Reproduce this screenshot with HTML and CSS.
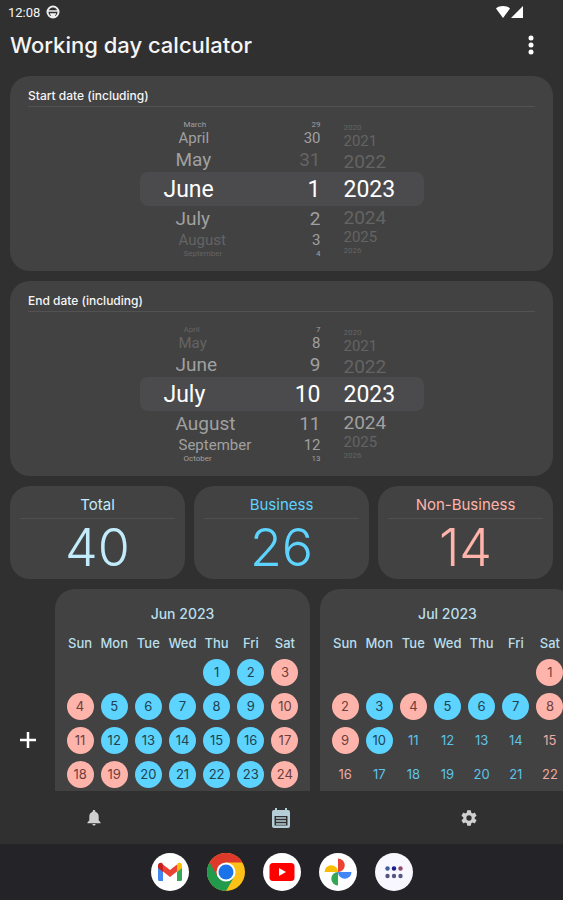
FILE: index.html
```html
<!DOCTYPE html>
<html lang="en">
<head>
  <meta charset="utf-8">
  <meta name="viewport" content="width=device-width, initial-scale=1">
  <title>Working day calculator</title>
  <link rel="stylesheet" href="styles.css">
</head>
<body>
  <div class="app">
    <div class="status-bar">
      <span class="clock">12:08</span>
      <svg class="status-icon" viewBox="0 0 14 14" width="14" height="14">
        <circle cx="7" cy="7" r="5.5" fill="none" stroke="#eee" stroke-width="2"/>
        <path d="M2 6h10M4 9h6" stroke="#eee" stroke-width="1.6"/>
        <path d="M5 9h4v3H5z" fill="#eee"/>
      </svg>
      <svg class="signal" viewBox="0 0 30 14" width="30" height="14">
        <path d="M1 3.5C4.500 .3 11.500 .3 15 3.500L8 13z" fill="#fff"/>
        <path d="M28 1v12H16z" fill="#fff"/>
      </svg>
    </div>

    <header class="header">
      <h1>Working day calculator</h1>
      <button class="icon-button" aria-label="More options">
        <svg viewBox="0 0 8 22" width="8" height="22" fill="#fff">
          <circle cx="4" cy="4" r="2.500"/><circle cx="4" cy="11" r="2.500"/><circle cx="4" cy="18" r="2.500"/>
        </svg>
      </button>
    </header>

    <main class="content">
      <section class="card date-card">
        <h2>Start date (including)</h2>
        <div class="picker">
          <ul class="wheel month">
            <li class="edge">March</li>
            <li class="far">April</li>
            <li class="near">May</li>
            <li class="selected">June</li>
            <li class="near">July</li>
            <li class="far dim">August</li>
            <li class="edge dim">September</li>
          </ul>
          <ul class="wheel day">
            <li class="edge">29</li>
            <li class="far">30</li>
            <li class="near dim">31</li>
            <li class="selected">1</li>
            <li class="near">2</li>
            <li class="far">3</li>
            <li class="edge">4</li>
          </ul>
          <ul class="wheel year">
            <li class="edge dim">2020</li>
            <li class="far dim">2021</li>
            <li class="near dim">2022</li>
            <li class="selected">2023</li>
            <li class="near dim">2024</li>
            <li class="far dim">2025</li>
            <li class="edge dim">2026</li>
          </ul>
        </div>
      </section>

      <section class="card date-card">
        <h2>End date (including)</h2>
        <div class="picker">
          <ul class="wheel month">
            <li class="edge dim">April</li>
            <li class="far dim">May</li>
            <li class="near">June</li>
            <li class="selected">July</li>
            <li class="near">August</li>
            <li class="far">September</li>
            <li class="edge">October</li>
          </ul>
          <ul class="wheel day">
            <li class="edge">7</li>
            <li class="far">8</li>
            <li class="near">9</li>
            <li class="selected">10</li>
            <li class="near">11</li>
            <li class="far">12</li>
            <li class="edge">13</li>
          </ul>
          <ul class="wheel year">
            <li class="edge dim">2020</li>
            <li class="far dim">2021</li>
            <li class="near dim">2022</li>
            <li class="selected">2023</li>
            <li class="near">2024</li>
            <li class="far dim">2025</li>
            <li class="edge dim">2026</li>
          </ul>
        </div>
      </section>

      <div class="totals">
        <section class="card total">
          <h3>Total</h3>
          <p>40</p>
        </section>
        <section class="card total business">
          <h3>Business</h3>
          <p>26</p>
        </section>
        <section class="card total non-business">
          <h3>Non-Business</h3>
          <p>14</p>
        </section>
      </div>

      <div class="calendars">
        <button class="add" aria-label="Add">
          <svg viewBox="0 0 18 18" width="18" height="18">
            <path d="M9 1v16M1 9h16" stroke="#fff" stroke-width="2.500"/>
          </svg>
        </button>
        <div class="card calendar"><table id="june"></table></div>
        <div class="card calendar"><table id="july"></table></div>
      </div>
    </main>

    <nav class="tabs">
      <button aria-label="Notifications">
        <svg viewBox="0 0 16 18" width="16" height="18" fill="#d0d0d0">
          <path d="M8 1c-.8 0-1.300.5-1.300 1.200v.6C4.500 3.400 3.300 5.200 3.300 7.500v4L1.500 13.300v.9h13v-.9l-1.800-1.800v-4c0-2.300-1.200-4.100-3.400-4.700v-.6C9.300 1.500 8.800 1 8 1zM6.400 15a1.600 1.600 0 0 0 3.200 0z"/>
        </svg>
      </button>
      <button aria-label="Calculator">
        <svg viewBox="0 0 20 22" width="20" height="22">
          <path d="M3 3h1V1h2v2h8V1h2v2h1a2 2 0 0 1 2 2v14a2 2 0 0 1-2 2H3a2 2 0 0 1-2-2V5a2 2 0 0 1 2-2z" fill="#b5cdd6"/>
          <path d="M3.500 9h13v9.500h-13z" fill="#303030"/>
          <path d="M5 11h10M5 14h10M5 17h10" stroke="#b5cdd6" stroke-width="1.500"/>
        </svg>
      </button>
      <button aria-label="Settings">
        <svg viewBox="2 2 20 20" width="16" height="16" fill="#d0d0d0">
          <path d="M19.140 12.940c.04-.3.060-.61.060-.94s-.02-.64-.07-.94l2.030-1.580a.49.49 0 0 0 .12-.61l-1.920-3.320a.49.49 0 0 0-.59-.22l-2.390.96a7 7 0 0 0-1.620-.94l-.36-2.540a.48.48 0 0 0-.48-.41h-3.840a.48.48 0 0 0-.47.41l-.36 2.540a7 7 0 0 0-1.620.94l-2.390-.96a.48.48 0 0 0-.59.220L2.740 8.870a.48.48 0 0 0 .12.610l2.030 1.580a6 6 0 0 0 0 1.880l-2.030 1.580a.49.49 0 0 0-.12.610l1.920 3.320c.12.220.37.290.59.220l2.390-.96c.5.380 1.030.7 1.620.94l.36 2.540c.05.240.24.410.48.410h3.840c.24 0 .44-.17.470-.41l.36-2.540a7 7 0 0 0 1.620-.94l2.390.96c.22.080.47 0 .59-.22l1.920-3.320a.48.48 0 0 0-.12-.61zM12 15.300a3.300 3.300 0 1 1 0-6.600 3.300 3.300 0 0 1 0 6.600z"/>
        </svg>
      </button>
    </nav>

    <footer class="dock">
      <button aria-label="Gmail">
        <svg viewBox="0 0 38 38" width="38" height="38">
          <circle cx="19" cy="19" r="19" fill="#fff"/>
          <path d="M7 14v12.500A1.500 1.500 0 0 0 8.500 28H12V15z" fill="#4285f4"/>
          <path d="M26 15v13h3.500a1.500 1.500 0 0 0 1.500-1.500V14z" fill="#34a853"/>
          <path d="M26 12v7l5-4v-2.500c0-2.500-2.500-3.500-4.300-2.200z" fill="#fbbc04"/>
          <path d="M12 11.500l7 5.500 7-5.500v7L19 24l-7-5.500z" fill="#ea4335"/>
          <path d="M7 12.500V15l5 4v-7.500l-.7-1.200C9.500 9 7 10 7 12.500z" fill="#c5221f"/>
        </svg>
      </button>
      <button aria-label="Chrome">
        <svg viewBox="0 0 38 38" width="38" height="38">
          <circle cx="19" cy="19" r="19" fill="#fbc116"/>
          <path d="M19 19L2.550 9.500A19 19 0 0 0 19 38l8.200-14.300z" fill="#219a4b"/>
          <path d="M2.550 9.500A19 19 0 0 1 35.500 9.500H19v9.500l-8.200 4.700z" fill="#de3a2c"/>
          <circle cx="19" cy="19" r="9.500" fill="#fff"/>
          <circle cx="19" cy="19" r="7.500" fill="#1a73e8"/>
        </svg>
      </button>
      <button aria-label="YouTube">
        <svg viewBox="0 0 38 38" width="38" height="38">
          <circle cx="19" cy="19" r="19" fill="#fff"/>
          <rect x="6.500" y="10" width="25" height="18" rx="3.500" fill="#f00"/>
          <path d="M16 15v8l7-4z" fill="#fff"/>
        </svg>
      </button>
      <button aria-label="Photos">
        <svg viewBox="0 0 38 38" width="38" height="38">
          <circle cx="19" cy="19" r="19" fill="#fff"/>
          <path d="M19 19V5.500a6.700 6.700 0 0 1 0 13.500z" fill="#ea4335"/>
          <path d="M19 19h13.500a6.700 6.700 0 0 1-13.500 0z" fill="#4285f4"/>
          <path d="M19 19v13.500a6.700 6.700 0 0 1 0-13.500z" fill="#34a853"/>
          <path d="M19 19H5.500a6.700 6.700 0 0 1 13.500 0z" fill="#fbbc04"/>
        </svg>
      </button>
      <button aria-label="All apps">
        <svg viewBox="0 0 38 38" width="38" height="38">
          <circle cx="19" cy="19" r="19" fill="#f8f7ff"/>
          <g fill="#55567c">
            <circle cx="12.500" cy="15.500" r="2.200" fill="#3c5c9e"/><circle cx="19" cy="15.500" r="2.200" fill="#1d1a8c"/><circle cx="25.500" cy="15.500" r="2.200" fill="#8c4a72"/>
            <circle cx="12.500" cy="23" r="2.200"/><circle cx="19" cy="23" r="2.200"/><circle cx="25.500" cy="23" r="2.200"/>
          </g>
        </svg>
      </button>
    </footer>
  </div>

  <script src="script.js"></script>
</body>
</html>
```
FILE: styles.css
```css
* {
  box-sizing: border-box;
}

body {
  margin: 0;
  background-color: #303030;
  color: #f5f5f5;
  font-family: Inter, "Open Sans", sans-serif;
}

h1, h2, h3, p, ul {
  margin: 0;
  padding: 0;
}

button {
  padding: 0;
  border: none;
  background: none;
  cursor: pointer;
}

svg {
  display: block;
}

.app {
  display: flex;
  flex-direction: column;
  height: 100vh;
}

.status-bar {
  display: flex;
  align-items: center;
  gap: 6px;
  height: 24px;
  padding: 0 38px 0 8px;
  font-family: Roboto, sans-serif;
  font-size: 13px;
}

.signal {
  margin-left: auto;
}

.header {
  display: flex;
  align-items: center;
  justify-content: space-between;
  height: 42px;
  padding: 0 28px 0 10px;
}

h1 {
  font-size: 22px;
  font-weight: 500;
}

.content {
  display: flex;
  flex: 1;
  flex-direction: column;
  gap: 10px;
  min-height: 0;
  padding: 10px 10px 0;
}

.card {
  background-color: #424242;
  border-radius: 20px;
}

/* date pickers */
.date-card {
  padding: 12px 18px 16px;
}

h2 {
  padding-bottom: 2px;
  border-bottom: 1px solid #525252;
  font-size: 12px;
  font-weight: 500;
  line-height: 16px;
}

.picker {
  display: flex;
  align-items: center;
  justify-content: center;
  height: 132px;
  margin-top: 16px;
}

.wheel {
  color: #a0a0a0;
  font-family: Roboto, sans-serif;
  list-style: none;
}

.wheel li {
  display: flex;
  align-items: center;
}

.wheel .selected {
  height: 34px;
  background-color: #4b4b4e;
  color: #fff;
  font-size: 23px;
}

.wheel .near {
  height: 25px;
  font-size: 19px;
}

.wheel .far {
  height: 18px;
  font-size: 15px;
}

.wheel .edge {
  height: 9px;
  font-size: 8px;
  line-height: 9px;
}

.wheel .dim {
  color: #646464;
}

.month {
  width: 132px;
}

.month .selected {
  padding-left: 24px;
  border-radius: 8px 0 0 8px;
}

.month .near {
  padding-left: 36px;
}

.month .far {
  padding-left: 39px;
}

.month .edge {
  padding-left: 44px;
}

.day {
  width: 49px;
}

.day li {
  justify-content: flex-end;
}

.year {
  width: 103px;
}

.year li {
  padding-left: 23px;
}

.year .selected {
  border-radius: 0 8px 8px 0;
}

.year .near {
  height: 22px;
}

/* totals */
.totals {
  display: grid;
  grid-template-columns: repeat(3, 1fr);
  gap: 9px;
}

.total {
  padding: 9px 10px 2px;
  color: #c2ecfb;
  text-align: center;
}

.total h3 {
  padding-bottom: 3px;
  border-bottom: 1px solid #505050;
  font-size: 15px;
  font-weight: 400;
  line-height: 20px;
}

.total p {
  font-size: 52px;
  font-weight: 300;
  line-height: 58px;
}

.business {
  color: #5dd3ff;
}

.non-business {
  color: #ffb4ab;
}

/* calendars */
.calendars {
  display: flex;
  flex: 1;
  gap: 10px;
  min-height: 0;
  margin-right: -10px;
  overflow: hidden;
}

.add {
  flex: none;
  width: 35px;
  padding: 100px 0 0 9px;
}

.calendar {
  flex: none;
  width: 255px;
  padding: 11px 8px 0;
  border-radius: 20px 20px 0 0;
}

.calendar table {
  width: 100%;
  border-spacing: 0;
  table-layout: fixed;
  color: #b9dfec;
  font-size: 13px;
  text-align: center;
}

.calendar th {
  height: 29px;
  padding: 4px 0 0;
  font-weight: 500;
}

.calendar .month-title {
  height: 26px;
  padding: 0;
  font-size: 14px;
}

.calendar td {
  height: 34px;
  padding: 0;
  color: #5dc4ea;
}

.calendar td.off {
  color: #f0aaa2;
}

.calendar span {
  display: block;
  width: 27px;
  margin: 0 auto;
  border-radius: 50%;
  line-height: 27px;
}

.calendar .counted span {
  background-color: #5dd3ff;
  color: #20424f;
}

.calendar .counted.off span {
  background-color: #ffb4ab;
  color: #6b3f3b;
}

/* bottom bars */
.tabs {
  display: grid;
  grid-template-columns: repeat(3, 1fr);
  height: 53px;
}

.tabs button {
  display: grid;
  place-items: center;
}

.dock {
  display: flex;
  align-items: center;
  justify-content: center;
  gap: 18px;
  height: 56px;
  background-color: #232328;
}
```
FILE: script.js
```js
const DAYS = ['Sun', 'Mon', 'Tue', 'Wed', 'Thu', 'Fri', 'Sat'];
const WEEKS = 4;

function renderMonth(id, title, firstWeekday, lastCounted, holidays) {
  let rows = '';
  for (let week = 0; week < WEEKS; week++) {
    rows += '<tr>';
    for (let i = 0; i < 7; i++) {
      const day = week * 7 + i - firstWeekday + 1;
      if (day < 1) {
        rows += '<td></td>';
        continue;
      }
      const off = i === 0 || i === 6 || holidays.includes(day);
      const classes = [off ? 'off' : '', day <= lastCounted ? 'counted' : ''].join(' ').trim();
      rows += `<td class="${classes}"><span>${day}</span></td>`;
    }
    rows += '</tr>';
  }

  document.getElementById(id).innerHTML = `
    <thead>
      <tr><th class="month-title" colspan="7">${title}</th></tr>
      <tr>${DAYS.map(d => `<th>${d}</th>`).join('')}</tr>
    </thead>
    <tbody>${rows}</tbody>
  `;
}

renderMonth('june', 'Jun 2023', 4, 30, [19]);
renderMonth('july', 'Jul 2023', 6, 10, [4]);
```
